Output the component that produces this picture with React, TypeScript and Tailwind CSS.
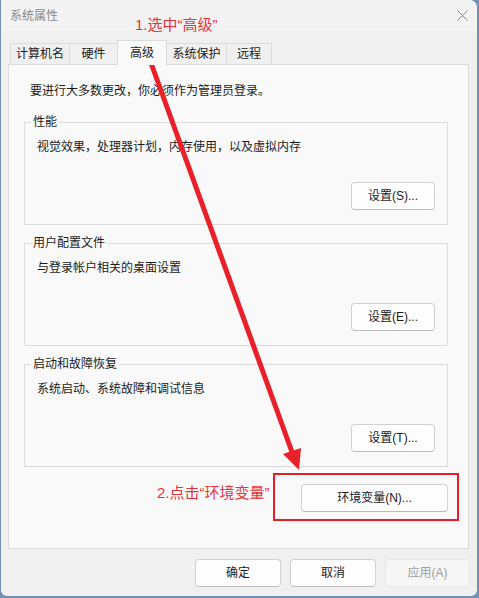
import React from "react";

const tabs = [
  { label: "计算机名", w: "w-[59px]" },
  { label: "硬件", w: "w-[48px]" },
  { label: "高级", w: "w-[50px]", active: true },
  { label: "系统保护", w: "w-[59px]" },
  { label: "远程", w: "w-[46px]" },
];

const groups = [
  { title: "性能", desc: "视觉效果，处理器计划，内存使用，以及虚拟内存", btn: "设置(S)..." },
  { title: "用户配置文件", desc: "与登录帐户相关的桌面设置", btn: "设置(E)..." },
  { title: "启动和故障恢复", desc: "系统启动、系统故障和调试信息", btn: "设置(T)..." },
];

function Btn({ children, className = "", disabled = false }: { children: React.ReactNode; className?: string; disabled?: boolean }) {
  return (
    <button
      className={
        "flex h-[28px] items-center justify-center rounded-[4px] border text-[12px] " +
        (disabled
          ? "border-[#e6e6e6] bg-[#f6f6f6] text-[#9d9d9d] "
          : "border-[#d1d1d1] border-b-[#bcbcbc] bg-[#fdfdfd] text-[#1b1b1b] ") +
        className
      }
    >
      {children}
    </button>
  );
}

export default function App() {
  return (
    <div className="relative h-[598px] w-[479px] overflow-hidden bg-[#7390b6] font-['Liberation_Sans','Noto_Sans_CJK_SC',sans-serif]">
      <div className="ml-px flex h-[596px] w-[476px] flex-col overflow-hidden rounded-tr-[8px] rounded-b-[6px] bg-[#f0f0f0]">
        {/* 标题栏 */}
        <div className="flex h-[31px] shrink-0 items-center justify-between bg-[#f3f3f3] pl-[9px] pr-[9px]">
          <span className="text-[12px] leading-[16px] text-[#8a8a8a]">系统属性</span>
          <svg width="11" height="11" viewBox="0 0 11 11" className="mb-px">
            <path d="M0.5 0.5 L10.5 10.5 M10.5 0.5 L0.5 10.5" stroke="#8a8a8a" strokeWidth="1" />
          </svg>
        </div>

        {/* 选项卡 */}
        <div className="ml-[9px] mt-[9px] flex h-[24px] items-end">
          {tabs.map((t, i) => {
            const afterActive = i > 0 && tabs[i - 1].active;
            return (
              <div
                key={t.label}
                className={
                  "flex items-center justify-center border-t border-[#dcdcdc] text-[12px] text-[#1b1b1b] " +
                  t.w +
                  (afterActive ? " border-l-0" : " border-l") +
                  (t.active || i === tabs.length - 1 ? " border-r" : "") +
                  (t.active
                    ? " relative z-10 -mb-px h-[25px] bg-[#f9f9f9]"
                    : " h-[21px] bg-[#f0f0f0]")
                }
              >
                {t.label}
              </div>
            );
          })}
        </div>

        {/* 面板 */}
        <div className="ml-[7px] flex h-[485px] w-[461px] flex-col border border-[#dcdcdc] bg-[#f9f9f9]">
          <p className="pl-[21px] pt-[18px] text-[12px] leading-[16px] text-[#1b1b1b]">
            要进行大多数更改，你必须作为管理员登录。
          </p>

          {groups.map((g, i) => (
            <fieldset
              key={g.title}
              className={
                "ml-[15px] flex w-[424px] flex-col border border-[#dcdcdc] " +
                (i === 0 ? "mt-[15px]" : "mt-[10px]")
              }
            >
              <legend className="ml-[6px] px-[2px] text-[12px] leading-[16px] text-[#1b1b1b]">{g.title}</legend>
              <p className="ml-[12px] mt-[9px] text-[12px] leading-[16px] text-[#1b1b1b]">{g.desc}</p>
              <div className="mb-[14px] mr-[12px] mt-[27px] flex justify-end">
                <Btn className="w-[84px]">{g.btn}</Btn>
              </div>
            </fieldset>
          ))}

          <div className="mr-[20px] mt-[17px] flex justify-end">
            <Btn className="w-[147px]">环境变量(N)...</Btn>
          </div>
        </div>

        {/* 底部按钮 */}
        <div className="mt-[10px] flex justify-end gap-[9px] pr-[7px]">
          <Btn className="w-[86px]">确定</Btn>
          <Btn className="w-[86px]">取消</Btn>
          <Btn className="w-[85px]" disabled>
            应用(A)
          </Btn>
        </div>
      </div>

      {/* 标注 */}
      <svg className="pointer-events-none absolute inset-0" width="479" height="598" viewBox="0 0 479 598">
        <line x1="151" y1="63" x2="292" y2="452" stroke="#e8202a" strokeWidth="5" />
        <polygon points="299,470 283,454 301,448" fill="#e8202a" />
        <rect x="274" y="474" width="184" height="46" fill="none" stroke="#e41d27" strokeWidth="2" />
      </svg>
      <span className="pointer-events-none absolute left-[135px] top-[15px] text-[15px] leading-[20px] text-[#e5333a]">
        1.选中“高级”
      </span>
      <span className="pointer-events-none absolute left-[157px] top-[483px] text-[15px] leading-[20px] text-[#e5333a]">
        2.点击“环境变量”
      </span>
    </div>
  );
}
